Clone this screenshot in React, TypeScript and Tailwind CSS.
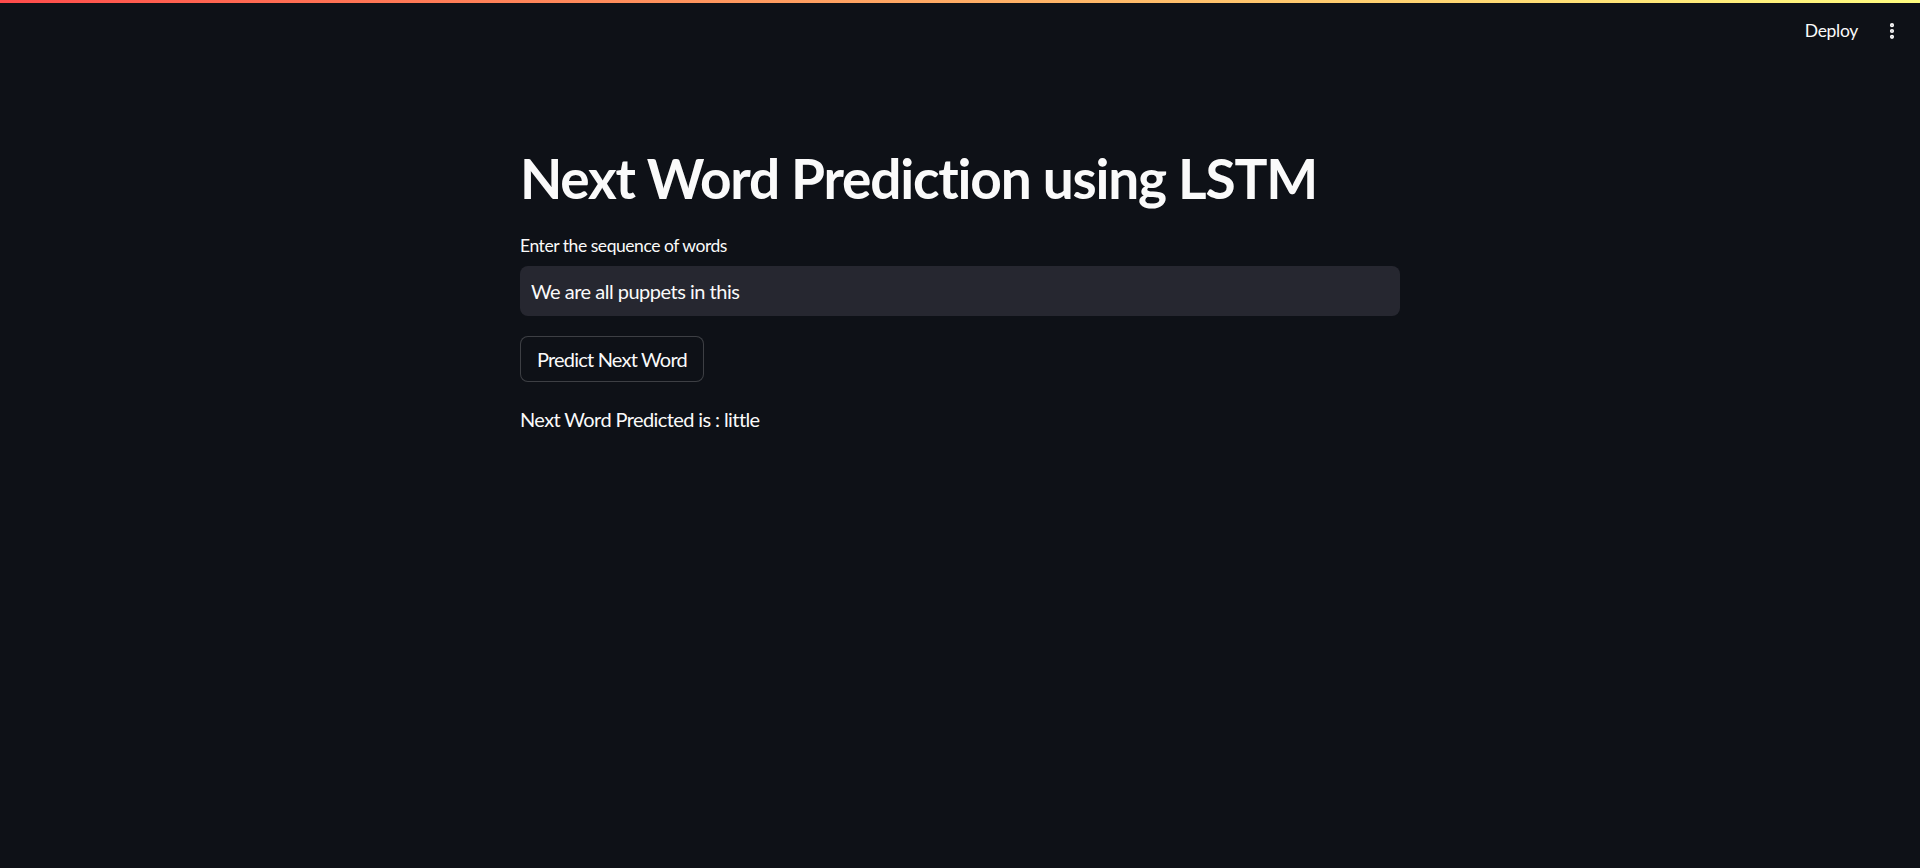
import { MoreVertical } from 'lucide-react';

const font = { fontFamily: '"Source Sans Pro", Lato, "Noto Sans", sans-serif' };

export default function App() {
  return (
    <div className="min-h-[868px] w-full bg-[#0e1117] text-[#fafafa]" style={font}>
      <div className="h-[3px] w-full bg-gradient-to-r from-[#ff4b4b] to-[#fffd80]" />
      <header className="flex h-[56px] items-center justify-end pr-[18px]">
        <button className="mr-[24px] text-[17.5px] tracking-[-0.3px] text-[#fafafa]">Deploy</button>
        <MoreVertical size={20} strokeWidth={3} className="text-[#fafafa]" />
      </header>
      <main className="mx-auto w-[880px] pt-[86px]">
        <h1 className="text-[55px] font-bold leading-[66px] tracking-[-1.2px]">
          Next Word Prediction using LSTM
        </h1>
        <label className="mt-[23px] block text-[17.5px] leading-[24px] tracking-[-0.45px]">
          Enter the sequence of words
        </label>
        <div className="mt-[8px] flex h-[50px] items-center rounded-[8px] bg-[#262730] px-[11px]">
          <input
            className="w-full bg-transparent text-[20px] tracking-[-0.5px] text-[#fafafa] outline-none"
            defaultValue="We are all puppets in this"
          />
        </div>
        <button className="mt-[20px] flex h-[46px] items-center rounded-[8px] border border-[rgba(250,250,250,0.2)] bg-[#0e1117] px-[16px] text-[20px] tracking-[-0.8px]">
          Predict Next Word
        </button>
        <p className="mt-[22px] text-[20px] leading-[30px] tracking-[-0.6px]">Next Word Predicted is : little</p>
      </main>
    </div>
  );
}
